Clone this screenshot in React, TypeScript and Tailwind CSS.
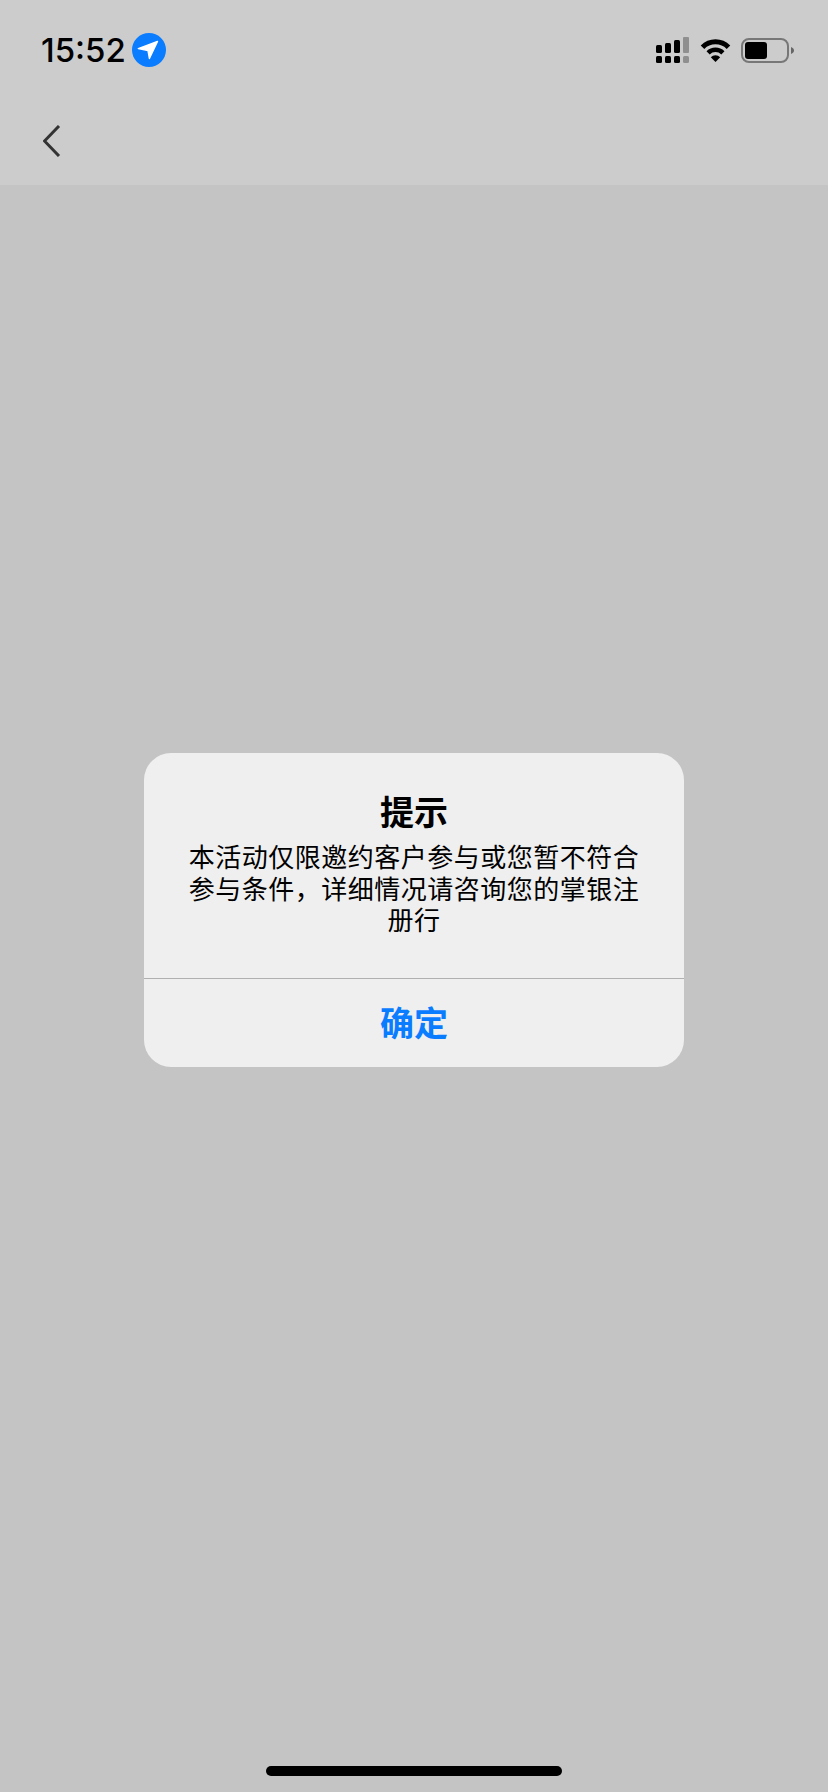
export default function App() {
  return (
    <div className="flex h-[1792px] w-[828px] flex-col overflow-hidden bg-[#c4c4c4] font-['Inter','Noto_Sans_CJK_SC',sans-serif]">
      <header className="h-[185px] bg-[#cccccc] pt-[33px]">
        <div className="flex h-[34px] items-center justify-between pl-[41px] pr-[34px]">
          <div className="flex items-center gap-[6px]">
            <span className="text-[33px] leading-[34px] font-medium text-black">15:52</span>
            <svg className="h-[34px] w-[34px]" viewBox="0 0 34 34">
              <circle cx="17" cy="17" r="17" fill="#0a7cff" />
              <path d="M25.5 8.5 L6.3 15.6 L16 17.6 L17.4 25.5 Z" fill="#fff" stroke="#fff" strokeWidth="1.4" strokeLinejoin="round" />
            </svg>
          </div>
          <div className="flex items-center">
            <svg className="h-[26px] w-[33px]" viewBox="0 0 33 26">
              <rect x="0" y="8" width="6" height="8" rx="1.5" fill="#000" />
              <rect x="9" y="6" width="6" height="10" rx="1.5" fill="#000" />
              <rect x="18" y="3" width="6" height="13" rx="1.5" fill="#000" />
              <rect x="27" y="0" width="6" height="16" rx="1" fill="#8f8f8f" />
              <rect x="0" y="19" width="6" height="7" rx="1.5" fill="#000" />
              <rect x="9" y="19" width="6" height="7" rx="1.5" fill="#000" />
              <rect x="18" y="19" width="6" height="7" rx="1.5" fill="#000" />
              <rect x="27" y="19" width="6" height="7" rx="1.5" fill="#8f8f8f" />
            </svg>
            <svg className="ml-[11px] h-[24px] w-[31px]" viewBox="0 0 31 24">
              <path d="M2.5 9.2 A18.4 18.4 0 0 1 28.5 9.2" fill="none" stroke="#000" strokeWidth="5" />
              <path d="M8.1 14.8 A10.5 10.5 0 0 1 22.9 14.8" fill="none" stroke="#000" strokeWidth="4.5" />
              <path d="M15.5 24 L10.8 19.2 A6.6 6.6 0 0 1 20.2 19.2 Z" fill="#000" />
            </svg>
            <div className="ml-[10px] flex h-[25px] w-[48px] items-center rounded-[8px] border-[2px] border-[#777777] px-[2px]">
              <div className="h-[17px] w-[22px] rounded-[3px] bg-black" />
            </div>
            <svg className="ml-[2px] h-[7px] w-[3px]" viewBox="0 0 3 7">
              <path d="M0 0 C2 0.8 3 2 3 3.5 C3 5 2 6.2 0 7 Z" fill="#666666" />
            </svg>
          </div>
        </div>
        <div className="mt-[58px] pl-[43px]">
          <svg className="h-[32px] w-[18px]" viewBox="0 0 18 32">
            <path d="M16 1 L1.5 16 L16 31" fill="none" stroke="#333333" strokeWidth="3" />
          </svg>
        </div>
      </header>
      <main className="flex flex-1 flex-col items-center pt-[568px] pb-[16px]">
        <div className="w-[540px] overflow-hidden rounded-[27px] bg-[#efefef]">
          <div className="h-[225px] px-[44px] pt-[40px] text-center">
            <h1 className="text-[34px] leading-[40px] font-bold text-black">提示</h1>
            <p className="mt-[9px] text-[26px] leading-[31.5px] tracking-[0.5px] text-black">
              本活动仅限邀约客户参与或您暂不符合参与条件，详细情况请咨询您的掌银注册行
            </p>
          </div>
          <div className="h-[1px] bg-[#b0b0b0]" />
          <div className="flex h-[88px] items-center justify-center text-[34px] font-bold text-[#0a7cff]">确定</div>
        </div>
        <div className="mt-auto h-[10px] w-[296px] rounded-full bg-black" />
      </main>
    </div>
  );
}
